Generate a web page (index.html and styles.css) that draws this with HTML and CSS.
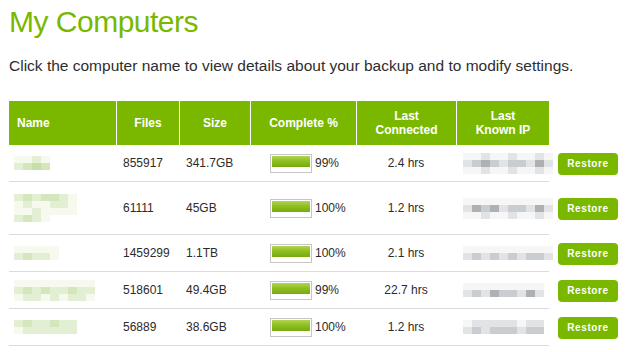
FILE: index.html
```html
<!DOCTYPE html>
<html>
<head>
    <meta charset="UTF-8">
    <meta name="viewport" content="width=device-width, initial-scale=1.0">
    <title>My Computers</title>
    <link rel="stylesheet" href="styles.css">
</head>
<body>
    <div class="page">
        <h1>My Computers</h1>
        <p class="intro">Click the computer name to view details about your backup and to modify settings.</p>

        <table class="computers">
            <colgroup>
                <col class="col-name">
                <col class="col-files">
                <col class="col-size">
                <col class="col-complete">
                <col class="col-connected">
                <col class="col-ip">
                <col class="col-action">
            </colgroup>
            <thead>
                <tr>
                    <th class="left">Name</th>
                    <th>Files</th>
                    <th>Size</th>
                    <th>Complete %</th>
                    <th>Last<br>Connected</th>
                    <th>Last<br>Known IP</th>
                    <th class="blank"></th>
                </tr>
            </thead>
            <tbody>
                <tr>
                    <td>
                        <div class="mosaic green w4">
                            <i class="m0"></i><i class="m0"></i><i class="m1"></i><i class="m0"></i>
                            <i class="m1"></i><i class="m2"></i><i class="m3"></i><i class="m2"></i>
                        </div>
                    </td>
                    <td>855917</td>
                    <td>341.7GB</td>
                    <td class="complete"><span class="bar"><span class="fill"></span></span>99%</td>
                    <td class="center">2.4 hrs</td>
                    <td>
                        <div class="mosaic gray w10">
                            <i class="g0"></i><i class="g0"></i><i class="g1"></i><i class="g0"></i><i class="g0"></i><i class="g1"></i><i class="g0"></i><i class="g0"></i><i class="g1"></i><i class="g0"></i>
                            <i class="g1"></i><i class="g2"></i><i class="g3"></i><i class="g2"></i><i class="g1"></i><i class="g2"></i><i class="g2"></i><i class="g1"></i><i class="g3"></i><i class="g1"></i>
                            <i class="g0"></i><i class="g0"></i><i class="g1"></i><i class="g0"></i><i class="g0"></i><i class="g1"></i><i class="g0"></i><i class="g0"></i><i class="g1"></i><i class="g0"></i>
                        </div>
                    </td>
                    <td class="action"><button class="restore">Restore</button></td>
                </tr>
                <tr class="tall">
                    <td>
                        <div class="mosaic green w7">
                            <i class="m1"></i><i class="m2"></i><i class="m1"></i><i class="m2"></i><i class="m2"></i><i class="m1"></i><i class="m0"></i>
                            <i class="m0"></i><i class="m1"></i><i class="m0"></i><i class="m0"></i><i class="m1"></i><i class="m1"></i><i class="m0"></i>
                            <i class="m0"></i><i class="m0"></i><i class="m1"></i><i class="m0"></i><i class="m0"></i><i class="m0"></i><i class="m0"></i>
                            <i class="m1"></i><i class="m2"></i><i class="m1"></i><i class="m0"></i><i class="x"></i><i class="x"></i><i class="x"></i>
                        </div>
                    </td>
                    <td>61111</td>
                    <td>45GB</td>
                    <td class="complete"><span class="bar"><span class="fill"></span></span>100%</td>
                    <td class="center">1.2 hrs</td>
                    <td>
                        <div class="mosaic gray w10">
                            <i class="g0"></i><i class="g0"></i><i class="g0"></i><i class="g0"></i><i class="g0"></i><i class="g0"></i><i class="g0"></i><i class="g0"></i><i class="g0"></i><i class="g0"></i>
                            <i class="g1"></i><i class="g3"></i><i class="g2"></i><i class="g3"></i><i class="g1"></i><i class="g2"></i><i class="g2"></i><i class="g1"></i><i class="g3"></i><i class="g1"></i>
                            <i class="g0"></i><i class="g0"></i><i class="g1"></i><i class="g0"></i><i class="g0"></i><i class="g1"></i><i class="g0"></i><i class="g0"></i><i class="g1"></i><i class="g0"></i>
                        </div>
                    </td>
                    <td class="action"><button class="restore">Restore</button></td>
                </tr>
                <tr>
                    <td>
                        <div class="mosaic green w5">
                            <i class="m0"></i><i class="m0"></i><i class="m0"></i><i class="m0"></i><i class="m0"></i>
                            <i class="m1"></i><i class="m2"></i><i class="m1"></i><i class="m1"></i><i class="m0"></i>
                        </div>
                    </td>
                    <td>1459299</td>
                    <td>1.1TB</td>
                    <td class="complete"><span class="bar"><span class="fill"></span></span>100%</td>
                    <td class="center">2.1 hrs</td>
                    <td>
                        <div class="mosaic gray w10">
                            <i class="g0"></i><i class="g0"></i><i class="g0"></i><i class="g0"></i><i class="g0"></i><i class="g0"></i><i class="g0"></i><i class="g0"></i><i class="g0"></i><i class="g0"></i>
                            <i class="g1"></i><i class="g2"></i><i class="g1"></i><i class="g2"></i><i class="g1"></i><i class="g2"></i><i class="g1"></i><i class="g2"></i><i class="g2"></i><i class="g1"></i>
                        </div>
                    </td>
                    <td class="action"><button class="restore">Restore</button></td>
                </tr>
                <tr>
                    <td>
                        <div class="mosaic green w9">
                            <i class="m0"></i><i class="m0"></i><i class="m0"></i><i class="m0"></i><i class="m0"></i><i class="m0"></i><i class="m0"></i><i class="m0"></i><i class="m0"></i>
                            <i class="m1"></i><i class="m2"></i><i class="m1"></i><i class="m2"></i><i class="m1"></i><i class="m1"></i><i class="m2"></i><i class="m1"></i><i class="m1"></i>
                            <i class="m0"></i><i class="m1"></i><i class="m1"></i><i class="m0"></i><i class="m1"></i><i class="m0"></i><i class="m1"></i><i class="m1"></i><i class="m0"></i>
                        </div>
                    </td>
                    <td>518601</td>
                    <td>49.4GB</td>
                    <td class="complete"><span class="bar"><span class="fill"></span></span>99%</td>
                    <td class="center">22.7 hrs</td>
                    <td>
                        <div class="mosaic gray w9">
                            <i class="g0"></i><i class="g0"></i><i class="g0"></i><i class="g0"></i><i class="g0"></i><i class="g0"></i><i class="g0"></i><i class="g0"></i><i class="g0"></i>
                            <i class="g1"></i><i class="g2"></i><i class="g1"></i><i class="g3"></i><i class="g2"></i><i class="g2"></i><i class="g1"></i><i class="g3"></i><i class="g1"></i>
                        </div>
                    </td>
                    <td class="action"><button class="restore">Restore</button></td>
                </tr>
                <tr>
                    <td>
                        <div class="mosaic green w7">
                            <i class="m1"></i><i class="m2"></i><i class="m1"></i><i class="m1"></i><i class="m2"></i><i class="m1"></i><i class="m1"></i>
                            <i class="m0"></i><i class="m1"></i><i class="m1"></i><i class="m1"></i><i class="m1"></i><i class="m1"></i><i class="m1"></i>
                        </div>
                    </td>
                    <td>56889</td>
                    <td>38.6GB</td>
                    <td class="complete"><span class="bar"><span class="fill"></span></span>100%</td>
                    <td class="center">1.2 hrs</td>
                    <td>
                        <div class="mosaic gray w9">
                            <i class="g0"></i><i class="g1"></i><i class="g1"></i><i class="g1"></i><i class="g1"></i><i class="g1"></i><i class="g0"></i><i class="g1"></i><i class="g1"></i>
                            <i class="g1"></i><i class="g2"></i><i class="g1"></i><i class="g2"></i><i class="g2"></i><i class="g2"></i><i class="g1"></i><i class="g2"></i><i class="g2"></i>
                        </div>
                    </td>
                    <td class="action"><button class="restore">Restore</button></td>
                </tr>
            </tbody>
        </table>
    </div>
</body>
</html>
```

FILE: styles.css
```css
body {
    margin: 0;
    background-color: #ffffff;
    font-family: "Liberation Sans", Arial, Helvetica, sans-serif;
    color: #2b2b2b;
}

.page {
    padding: 0 9px;
}

h1 {
    margin: 0;
    padding-top: 5px;
    font-size: 30px;
    font-weight: normal;
    line-height: 34px;
    color: #79b800;
    letter-spacing: -0.5px;
}

.intro {
    margin: 18px 0 0;
    font-size: 15.5px;
    line-height: 18px;
    color: #2e2e2e;
}

/* Computer list */
.computers {
    margin-top: 26px;
    border-collapse: separate;
    border-spacing: 0;
    table-layout: fixed;
    width: 612px;
    font-size: 12px;
}

.col-name { width: 107px; }
.col-files { width: 63px; }
.col-size { width: 71px; }
.col-complete { width: 106px; }
.col-connected { width: 100px; }
.col-ip { width: 93px; }
.col-action { width: 72px; }

.computers th {
    box-sizing: border-box;
    height: 44px;
    padding: 0 6px;
    background-color: #7ab800;
    color: #ffffff;
    font-size: 12px;
    font-weight: bold;
    line-height: 14px;
    text-align: center;
    vertical-align: middle;
    border-left: 1px solid #ffffff;
}

.computers th.left {
    text-align: left;
    padding-left: 8px;
    border-left: none;
}

.computers th.blank {
    background-color: transparent;
    border-left: none;
}

.computers td {
    box-sizing: border-box;
    height: 37px;
    padding: 0 0 0 7px;
    border-bottom: 1px solid #d6dce2;
    vertical-align: middle;
    white-space: nowrap;
}

.computers tr.tall td {
    height: 53px;
}

.computers td:first-child {
    padding-left: 5px;
}

.computers td.center {
    text-align: center;
    padding-left: 0;
}

.computers td.action {
    border-bottom: none;
    padding-left: 9px;
}

/* Backup progress */
.computers td.complete {
    padding-left: 20px;
}

.bar {
    display: inline-block;
    box-sizing: border-box;
    width: 42px;
    height: 19px;
    padding: 1px 1px 4px;
    margin-right: 3px;
    vertical-align: middle;
    border: 1px solid #c6c6c6;
    background-color: #ffffff;
}

.fill {
    display: block;
    height: 11px;
    background: linear-gradient(#b2d452, #8fc023 45%, #77aa0e);
}

.restore {
    width: 60px;
    height: 22px;
    padding: 0;
    border: none;
    border-radius: 4px;
    background-color: #7ab800;
    color: #ffffff;
    font-family: "Liberation Sans", Arial, sans-serif;
    font-size: 10px;
    font-weight: bold;
    letter-spacing: 0.6px;
    cursor: pointer;
}

/* Pixelated placeholders for hidden names and addresses */
.mosaic {
    display: grid;
    grid-auto-rows: 7px;
}

.mosaic i {
    display: block;
}

.w4 { grid-template-columns: repeat(4, 9px); }
.w5 { grid-template-columns: repeat(5, 9px); }
.w7 { grid-template-columns: repeat(7, 9px); }
.w9 { grid-template-columns: repeat(9, 9px); }
.w10 { grid-template-columns: repeat(10, 9px); }

.m0 { background-color: #f5f9ee; }
.m1 { background-color: #e3efd3; }
.m2 { background-color: #d3e6bc; }
.m3 { background-color: #c6dfa9; }
.x { background-color: transparent; }

.g0 { background-color: #f6f6f7; }
.g1 { background-color: #e1e3e5; }
.g2 { background-color: #c9ccd0; }
.g3 { background-color: #aeb1b4; }
```
